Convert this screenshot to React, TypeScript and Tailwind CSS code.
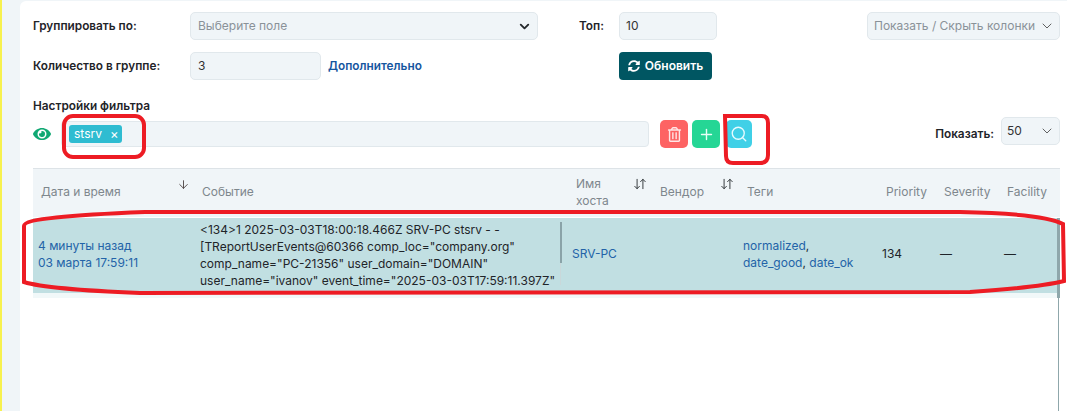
import { ChevronDown, Plus, Search, ArrowDown, ArrowDownUp } from 'lucide-react'
import { FaEye, FaSyncAlt, FaRegTrashAlt } from 'react-icons/fa'

const cols = 'grid grid-cols-[160px_374px_84px_87px_139px_58px_63px_62px]'
const field = 'h-[28px] rounded-[5px] border border-[#e1e8ec] bg-[#f0f5f8] flex items-center text-[12px]'
const label = 'pt-[2px] text-[11.8px] font-semibold text-[#1f2429]'

function SortIcon() {
  return <ArrowDownUp size={14} strokeWidth={1.6} className="text-[#2b3034]" />
}

function Th({ children, sort, down }: { children: React.ReactNode; sort?: boolean; down?: boolean }) {
  return (
    <div className={`relative flex items-center pb-[3px] pr-[22px] text-[12px] leading-[17px] text-[#7e878d] ${down ? 'pl-[8px]' : 'pl-[9px]'}`}>
      <span>{children}</span>
      {sort && <span className="absolute right-[4px] top-[8px]"><SortIcon /></span>}
      {down && <ArrowDown size={13} strokeWidth={1.5} className="absolute right-[3px] top-[9px] text-[#3a2f2f]" />}
    </div>
  )
}

export default function App() {
  return (
    <div className="relative h-[411px] w-[1067px] overflow-hidden border-l-2 border-[#f7f14e] bg-[#f0f5f8] font-['Inter',sans-serif]">
      <div className="ml-[18px] mt-[1px] flex h-[410px] flex-col rounded-tl-[6px] bg-white pl-[13px] pr-[7px] pt-[11px]">
        {/* Group settings */}
        <div className="flex h-[28px] items-center">
          <span className={`${label} w-[157px]`}>Группировать по:</span>
          <div className={`${field} w-[348px] justify-between pl-[7px] pr-[5px] text-[#8a9298]`}>
            Выберите поле
            <ChevronDown size={15} strokeWidth={3} className="text-[#25292c]" />
          </div>
          <span className={`${label} ml-[41px] w-[40px]`}>Топ:</span>
          <div className={`${field} w-[98px] pl-[6px] text-[#333]`}>10</div>
          <div className={`${field} ml-[150px] w-[193px] justify-between pl-[6px] pr-[4px] text-[#8a9298]`}>
            Показать / Скрыть колонки
            <ChevronDown size={16} strokeWidth={1.4} className="text-[#555]" />
          </div>
        </div>

        <div className="mt-[12px] flex h-[28px] items-center">
          <span className={`${label} w-[157px]`}>Количество в группе:</span>
          <div className={`${field} w-[131px] pl-[7px] text-[#333]`}>3</div>
          <span className="ml-[7px] w-[291px] pt-[2px] text-[11.8px] font-semibold text-[#16569f]">Дополнительно</span>
          <button className="flex h-[28px] w-[93px] items-center justify-center gap-[5px] rounded-[4px] bg-[#005662] text-[12px] font-semibold text-white">
            <FaSyncAlt size={12} />
            Обновить
          </button>
        </div>

        {/* Filter */}
        <div className={`${label} mt-[17px] leading-[15px]`}>Настройки фильтра</div>
        <div className="mt-[6px] flex h-[28px] items-center">
          <FaEye size={18} className="w-[28px] pr-[10px] text-[#10a873]" />
          <div className="flex h-[26px] w-[589px] items-center rounded-[4px] border border-[#e1e8ec] bg-[#f0f5f8] pl-[7px]">
            <span className="flex h-[18px] w-[53px] items-center gap-[8px] rounded-[3px] bg-[#2fbcd1] pl-[5px] text-[12px] text-white">
              stsrv <span className="text-[13px] leading-none">×</span>
            </span>
          </div>
          <button className="ml-[11px] flex h-[28px] w-[28px] items-center justify-center rounded-[5px] bg-[#fd6363] text-[#ffe6e6]">
            <FaRegTrashAlt size={15} />
          </button>
          <button className="ml-[4px] flex h-[28px] w-[28px] items-center justify-center rounded-[5px] bg-[#25d695] text-[#e8fff6]">
            <Plus size={17} strokeWidth={2} />
          </button>
          <button className="ml-[6px] flex h-[28px] w-[26px] items-center justify-center rounded-[5px] bg-[#40d0e7] text-[#e8fbff]">
            <Search size={18} strokeWidth={1.8} />
          </button>
          <span className={`${label} ml-[183px] w-[66px]`}>Показать:</span>
          <div className={`${field} -mt-[6px] w-[59px] justify-between pl-[5px] pr-[4px] text-[#333]`}>
            50
            <ChevronDown size={16} strokeWidth={1.4} className="text-[#555]" />
          </div>
        </div>

        {/* Table */}
        <div className="mt-[20px] border-t border-[#dde3e7]">
          <div className={`${cols} h-[48px] bg-[#f0f5f8]`}>
            <Th down>Дата и время</Th>
            <Th>Событие</Th>
            <Th sort>Имя хоста</Th>
            <Th sort>Вендор</Th>
            <Th>Теги</Th>
            <Th>Priority</Th>
            <Th>Severity</Th>
            <Th>Facility</Th>
          </div>
          <div className={`${cols} mt-[1px] h-[75px] items-center bg-[#c1dfe2] text-[12px] leading-[17px] text-[#1f2429]`}>
            <div className="pb-[4px] pl-[5px] text-[#2363a8]">
              4 минуты назад
              <br />
              03 марта 17:59:11
            </div>
            <div className="whitespace-nowrap pb-[1px] pl-[7px]">
              &lt;134&gt;1 2025-03-03T18:00:18.466Z SRV-PC stsrv - -
              <br />
              [TReportUserEvents@60366 comp_loc="company.org"
              <br />
              comp_name="PC-21356" user_domain="DOMAIN"
              <br />
              user_name="ivanov" event_time="2025-03-03T17:59:11.397Z"
            </div>
            <div className="pb-[4px] pl-[5px] text-[#2363a8]">SRV-PC</div>
            <div />
            <div className="pb-[4px] pl-[5px] text-[#2363a8]">
              normalized<span className="text-[#1f2429]">,</span>
              <br />
              date_good<span className="text-[#1f2429]">,</span> date_ok
            </div>
            <div className="pb-[4px] pl-[5px]">134</div>
            <div className="pb-[4px] pl-[5px]">—</div>
            <div className="pb-[4px] pl-[6px]">—</div>
          </div>
          <div className="h-[5px] bg-[#f1f8f9]" />
        </div>
      </div>

      {/* column resize handle and table scrollbar */}
      <div className="absolute left-[558px] top-[222px] h-[41px] w-[2px] bg-[#8aa3a8]" />
      <div className="absolute left-[558px] top-[263px] h-[22px] w-[1px] bg-[#c9d8da]" />
      <div className="absolute left-[1055px] top-[218px] h-[80px] w-[3px] bg-[#8fa7ab]" />
      <div className="absolute left-[1056px] top-[298px] h-[113px] w-[1px] bg-[#8fa7ab]" />

      {/* red hand-drawn marks */}
      <svg className="pointer-events-none absolute -left-[2px] top-0" width="1067" height="411" fill="none" stroke="#ed1c24" strokeWidth="4">
        <rect x="64" y="116" width="80" height="41" rx="9" />
        <path d="M725 116 H762 Q768 116 768 123 V155 Q768 163 760 163 H733 Q726 163 726 156 Z" />
        <path d="M24 226 C24 219 70 215 145 212 L960 212 C1010 213 1050 217 1063 224 L1064 281 C1040 287 1000 290 970 292 L140 293 C90 291 40 287 24 282 Z" />
      </svg>
    </div>
  )
}
